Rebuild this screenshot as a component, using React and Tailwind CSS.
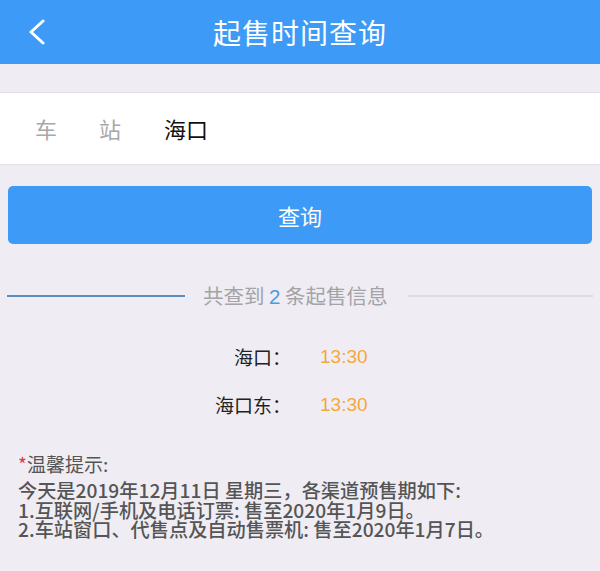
const FONT = "font-['Noto_Sans_CJK_SC','Noto_Sans',sans-serif]"

function Header() {
  return (
    <div className="relative flex h-16 items-center justify-center bg-[#3d9af6]">
      <svg
        className="absolute left-[26px] top-[19px]"
        width="22"
        height="26"
        viewBox="0 0 22 26"
        fill="none"
      >
        <path d="M17 2 L5 13 L17 24" stroke="white" strokeWidth="3" strokeLinecap="round" strokeLinejoin="round" />
      </svg>
      <span className="text-[28px] leading-none tracking-[1px] text-white">起售时间查询</span>
    </div>
  )
}

function TimeRow({ name, time }) {
  return (
    <div className="grid grid-cols-[291px_1fr] items-center">
      <span className="text-right text-[19px] text-[#222]">{name}：</span>
      <span className="pl-[29px] font-['Liberation_Sans',sans-serif] text-[19px] text-[#f4a83c]">{time}</span>
    </div>
  )
}

export default function App() {
  return (
    <div className={`h-[571px] w-[600px] overflow-hidden bg-[#efedf3] ${FONT}`}>
      <Header />
      <div className="h-[29px] border-b border-[#e2e0e6]" />

      {/* station input */}
      <div className="flex h-[72px] items-center border-b border-[#e2e0e6] bg-white pl-[35px]">
        <span className="text-[22px] text-[#a8a8a8]">车</span>
        <span className="ml-[42px] text-[22px] text-[#a8a8a8]">站</span>
        <span className="ml-[43px] text-[22px] text-[#111]">海口</span>
      </div>

      <div className="px-2 pt-[21px]">
        <button className="flex h-[58px] w-full items-center justify-center rounded-[5px] bg-[#3d9af6] text-[22px] text-white">
          查询
        </button>
      </div>

      {/* result count divider */}
      <div className="mt-[37px] flex items-center px-[7px]">
        <div className="h-[2px] w-[178px] bg-[#5a8fc4]" />
        <span className="ml-[18px] text-[20.5px] leading-[28px] text-[#a3a3a8]">
          共查到 <span className="font-['Liberation_Sans',sans-serif] text-[#4a9be6]">2</span> 条起售信息
        </span>
        <div className="ml-[20px] h-[2px] flex-1 bg-[#dcdbe0]" />
      </div>

      <div className="mt-[32px] flex flex-col gap-[19px]">
        <TimeRow name="海口" time="13:30" />
        <TimeRow name="海口东" time="13:30" />
      </div>

      {/* tips */}
      <div className="mt-[33px] px-[18px] text-[#555]">
        <div className="text-[19px] leading-[24px]">
          <span className="text-[#e23b3b]">*</span>温馨提示:
        </div>
        <div className="mt-[5px] text-[19.2px] font-medium leading-[19.5px]">
          <p>今天是2019年12月11日 星期三，各渠道预售期如下:</p>
          <p>1.互联网/手机及电话订票: 售至2020年1月9日。</p>
          <p>2.车站窗口、代售点及自动售票机: 售至2020年1月7日。</p>
        </div>
      </div>
    </div>
  )
}
